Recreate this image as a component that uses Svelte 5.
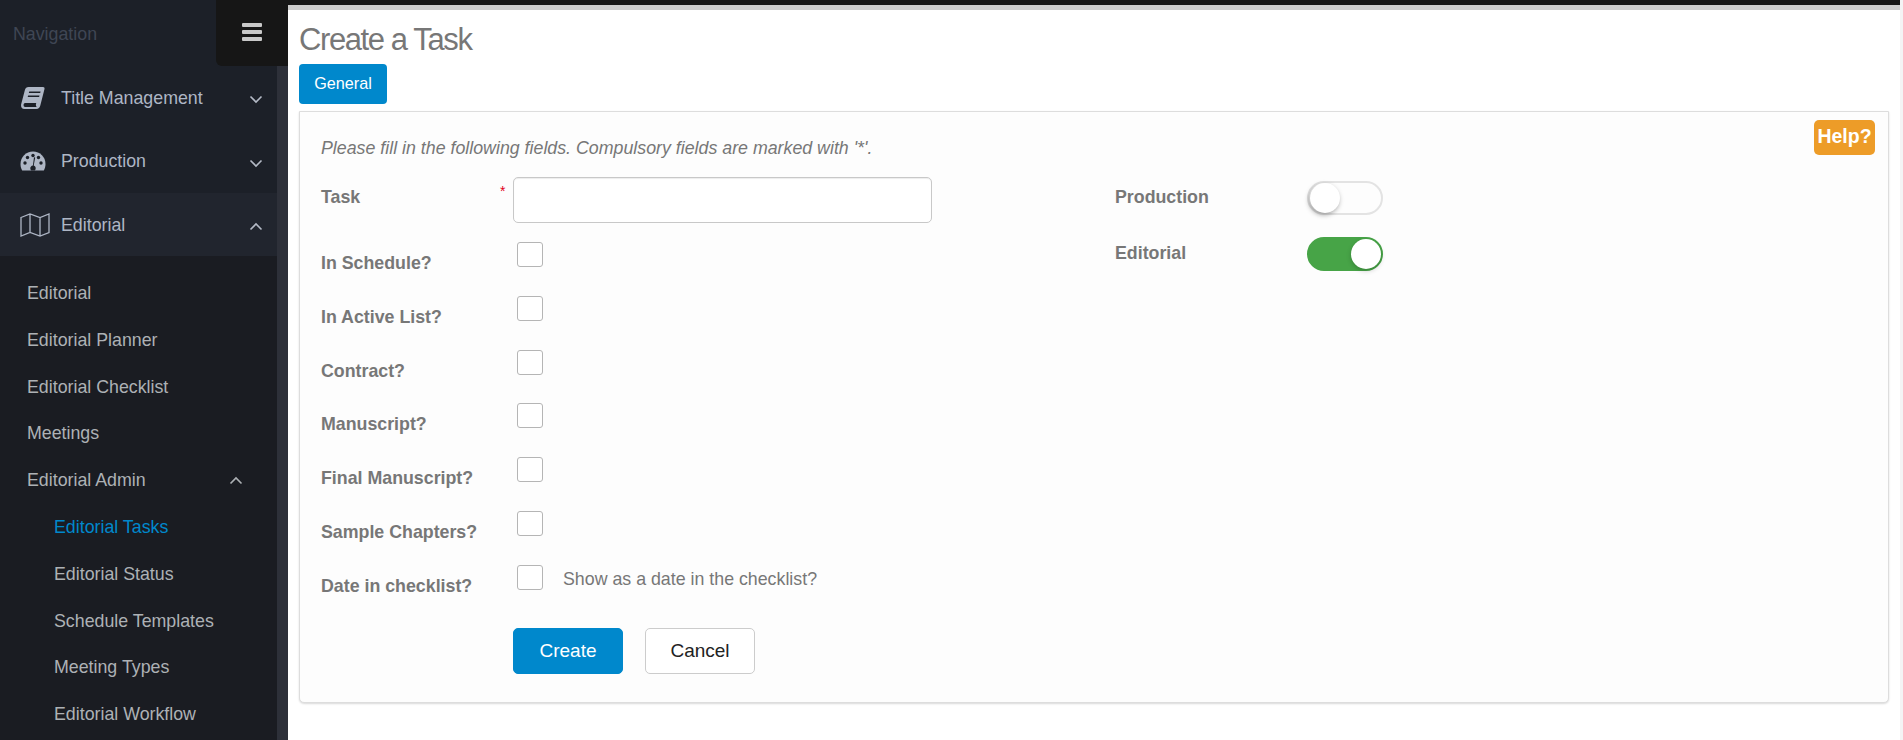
<script>
  const top = [
    { label: 'Title Management', icon: 'book', open: false },
    { label: 'Production', icon: 'gauge', open: false }
  ];
  const sub = ['Editorial', 'Editorial Planner', 'Editorial Checklist', 'Meetings'];
  const third = ['Editorial Tasks', 'Editorial Status', 'Schedule Templates', 'Meeting Types', 'Editorial Workflow'];
  const checks = ['In Schedule?', 'In Active List?', 'Contract?', 'Manuscript?', 'Final Manuscript?', 'Sample Chapters?'];
</script>

{#snippet chevron(up)}
  <svg class="chev" viewBox="0 0 14 9" width="14" height="9" aria-hidden="true">
    <path d={up ? 'M1.5 7.5 7 2l5.5 5.5' : 'M1.5 1.5 7 7l5.5-5.5'} fill="none" stroke="currentColor" stroke-width="1.6" />
  </svg>
{/snippet}

<div class="page">
  <aside class="side">
    <div class="head">
      <span class="navtitle">Navigation</span>
      <button class="burger" aria-label="Toggle menu"><i></i><i></i><i></i></button>
    </div>
    {#each top as t}
      <div class="item">
        <span class="ico">
          {#if t.icon === 'book'}
            <svg viewBox="0 0 26 24" width="26" height="24" aria-hidden="true">
              <path fill="#aeb6c5" fill-rule="evenodd" d="M8.500 1H23c1.200 0 1.800.8 1.500 1.900L20.300 19.500c-.6 2.300-1.800 3.500-3.800 3.500H4.500C2 23 .6 21 1.100 18.500L4.900 4C5.400 2.200 6.700 1 8.500 1ZM9.200 5.500l-.4 1.500h11.400l.4-1.500ZM8.100 9.500l-.4 1.500h11.400l.4-1.500ZM5 17c-1.800 0-2 4 .2 4H16.800c-1.200-.9-1.100-2.900-.5-4Z"/>
            </svg>
          {:else}
            <svg viewBox="0 0 26 22" width="26" height="22" aria-hidden="true">
              <path fill="#aeb6c5" fill-rule="evenodd" d="M13 1.500C6 1.500.500 7 .500 14c0 2.500.6 4.500 1.700 6.500h21.600c1.100-2 1.700-4 1.700-6.500C25.500 7 20 1.500 13 1.500Z"/>
              <g fill="#1c2028">
                <circle cx="13" cy="5.500" r="1.700"/><circle cx="7.500" cy="7.500" r="1.700"/><circle cx="18.500" cy="7.500" r="1.700"/><circle cx="5" cy="13" r="1.700"/><circle cx="21" cy="13" r="1.700"/>
                <path d="M15.200 7.500 13.700 15.500c1.200.4 2 1.500 2 2.700 0 .9-.3 1.700-.9 2.300h-3.600c-.6-.6-.9-1.400-.9-2.300 0-1.500 1.100-2.700 2.600-2.800L14 7.300Z"/>
              </g>
            </svg>
          {/if}
        </span>
        <span class="label">{t.label}</span>
        {@render chevron(false)}
      </div>
    {/each}
    <div class="item active">
      <span class="ico">
        <svg viewBox="0 0 30 26" width="30" height="26" aria-hidden="true">
          <path fill="none" stroke="#aeb6c5" stroke-width="1.300" d="M1 5.500 10 2l10 3.500L29 2v18.500L20 24l-10-3.500L1 24ZM10 2v18.500M20 5.500V24"/>
        </svg>
      </span>
      <span class="label">Editorial</span>
      {@render chevron(true)}
    </div>
    <ul class="menu">
      {#each sub as s}
        <li>{s}</li>
      {/each}
      <li class="has-sub">Editorial Admin {@render chevron(true)}</li>
      {#each third as s, i}
        <li class="deep" class:current={i === 0}>{s}</li>
      {/each}
    </ul>
  </aside>

  <main class="main">
    <div class="topbar"></div>
    <h1>Create a Task</h1>
    <button class="tab">General</button>
    <section class="panel">
      <button class="help">Help?</button>
      <p class="intro">Please fill in the following fields. Compulsory fields are marked with '*'.</p>
      <div class="cols">
        <div class="left">
          <div class="taskrow">
            <span class="lab">Task</span>
            <span class="req">*</span>
            <input type="text" class="text" aria-label="Task" />
          </div>
          {#each checks as c}
            <div class="row">
              <span class="lab">{c}</span>
              <input type="checkbox" class="box" aria-label={c} />
            </div>
          {/each}
          <div class="row">
            <span class="lab">Date in checklist?</span>
            <input type="checkbox" class="box" aria-label="Date in checklist?" />
            <span class="hint">Show as a date in the checklist?</span>
          </div>
          <div class="actions">
            <button class="btn primary">Create</button>
            <button class="btn">Cancel</button>
          </div>
        </div>
        <div class="right">
          <div class="trow">
            <span class="lab">Production</span>
            <span class="toggle"><span class="knob"></span></span>
          </div>
          <div class="trow">
            <span class="lab">Editorial</span>
            <span class="toggle on"><span class="knob"></span></span>
          </div>
        </div>
      </div>
    </section>
  </main>
</div>

<style>
  :global(body) {
    margin: 0;
    background: #f4f4f5;
    font-family: "Liberation Sans", Arial, sans-serif;
    font-size: 17.800px;
    overflow: hidden;
  }
  .page {
    display: flex;
    height: 740px;
    overflow: hidden;
  }
  .side {
    flex: 0 0 277px;
    width: 277px;
    border-right: 11px solid #2d3039;
    background: #1a1c22;
    color: #aeb6c5;
  }
  .head {
    position: relative;
    height: 66px;
    display: flex;
    align-items: center;
    padding-left: 13px;
    background: #1c2028;
  }
  .navtitle {
    color: #3f4654;
    margin-top: 2px;
  }
  .burger {
    position: absolute;
    left: 216px;
    top: 0;
    width: 72px;
    height: 66px;
    border: 0;
    background: #161616;
    border-bottom-left-radius: 6px;
    display: flex;
    flex-direction: column;
    align-items: center;
    justify-content: flex-start;
    gap: 3px;
    padding: 23px 0 0;
  }
  .burger i {
    display: block;
    width: 20px;
    height: 4px;
    border-radius: 1px;
    background: #c8c8c8;
  }
  .item {
    display: flex;
    align-items: center;
    height: 63.500px;
    background: #1c2028;
    padding-left: 20px;
    padding-right: 14px;
  }
  .item.active {
    background: #21252e;
    height: 63px;
  }
  .ico {
    width: 41px;
    display: flex;
    align-items: center;
  }
  .label {
    flex: 1;
    margin-top: 1px;
  }
  .item .chev {
    color: #b4bac6;
    margin-top: 4px;
  }
  .menu {
    list-style: none;
    margin: 0;
    padding: 14px 0 0;
    color: #adb1b5;
  }
  .menu li {
    height: 46.800px;
    line-height: 46.800px;
    padding-left: 27px;
    display: flex;
    align-items: center;
  }
  .menu .deep {
    padding-left: 54px;
  }
  .menu .current {
    color: #0088cc;
  }
  .has-sub {
    justify-content: space-between;
    padding-right: 34px;
  }
  .main {
    flex: 0 0 1612px;
    width: 1612px;
    background: #fff;
    height: 740px;
  }
  .topbar {
    height: 5px;
    background: #161616;
    border-bottom: 5px solid #cccccc;
  }
  h1 {
    margin: 0;
    padding: 9px 0 3px 11px;
    height: 42px;
    font-size: 31px;
    font-weight: 400;
    line-height: 42px;
    letter-spacing: -1.400px;
    color: #777;
  }
  .tab {
    display: block;
    margin-left: 11px;
    width: 88px;
    height: 40px;
    border: 0;
    border-radius: 4px;
    background: #0088cc;
    color: #fff;
    font: 16.200px "Liberation Sans", Arial, sans-serif;
    padding: 0 0 2px;
  }
  .panel {
    position: relative;
    margin: 7px 0 0 11px;
    width: 1590px;
    height: 592px;
    box-sizing: border-box;
    border: 1px solid #dddddd;
    border-radius: 0 0 5px 5px;
    background: #fdfdfd;
    box-shadow: 0 1px 2px rgba(0,0,0,.15);
    padding: 0 21px;
    color: #777;
  }
  .help {
    position: absolute;
    top: 8px;
    right: 13px;
    width: 61px;
    height: 35px;
    border: 0;
    border-radius: 5px;
    background: #ed9c28;
    color: #fff;
    font: bold 19.500px "Liberation Sans", Arial, sans-serif;
    padding: 0 0 2px;
  }
  .intro {
    margin: 0;
    padding-top: 25px;
    height: 40px;
    line-height: 22px;
    font-style: italic;
    color: #777;
  }
  .cols {
    display: flex;
  }
  .left {
    width: 794px;
  }
  .lab {
    font-weight: 700;
    color: #777;
    width: 196px;
    flex: none;
  }
  .taskrow {
    display: flex;
    align-items: flex-start;
    height: 65px;
    position: relative;
  }
  .taskrow .lab {
    margin-top: 10px;
    width: 179px;
  }
  .req {
    color: #e2001a;
    font-size: 14px;
    line-height: 14px;
    margin-top: 7px;
    width: 13px;
    flex: none;
  }
  .text {
    width: 419px;
    height: 46px;
    box-sizing: border-box;
    border: 1px solid #c8c8c8;
    border-radius: 5px;
    background: #fff;
    box-shadow: inset 0 1px 1px rgba(0,0,0,.075);
    margin: 0;
  }
  .row {
    height: 53.800px;
    display: flex;
    align-items: flex-start;
  }
  .row .lab {
    margin-top: 11px;
  }
  .box {
    appearance: none;
    margin: 0;
    width: 26px;
    height: 25px;
    box-sizing: border-box;
    border: 1px solid #b5b5b5;
    border-radius: 3px;
    background: #fff;
  }
  .hint {
    margin: 4px 0 0 20px;
    color: #777;
  }
  .actions {
    display: flex;
    gap: 22px;
    padding-left: 192px;
    margin-top: 9px;
  }
  .btn {
    width: 110px;
    height: 46px;
    box-sizing: border-box;
    border: 1px solid #cccccc;
    border-radius: 5px;
    background: #fff;
    color: #222;
    font: 19px "Liberation Sans", Arial, sans-serif;
    padding: 0;
  }
  .btn.primary {
    background: #0088cc;
    border-color: #0088cc;
    color: #fff;
  }
  .right {
    padding-top: 4px;
  }
  .trow {
    display: flex;
    align-items: center;
    height: 34px;
    margin-bottom: 22px;
  }
  .trow .lab {
    width: 192px;
    margin-top: -2px;
  }
  .toggle {
    position: relative;
    width: 76px;
    height: 34px;
    box-sizing: border-box;
    border: 2px solid #e3e3e3;
    border-radius: 17px;
    background: #fdfdfd;
  }
  .toggle.on {
    background: #47a447;
    border-color: #47a447;
  }
  .knob {
    position: absolute;
    left: 1px;
    top: 0;
    width: 30px;
    height: 30px;
    border-radius: 50%;
    background: #fff;
    box-shadow: -1px 2px 5px rgba(0,0,0,.35);
  }
  .toggle.on .knob {
    left: auto;
    right: 0;
    box-shadow: 0 2px 5px rgba(0,0,0,.2);
  }
</style>
